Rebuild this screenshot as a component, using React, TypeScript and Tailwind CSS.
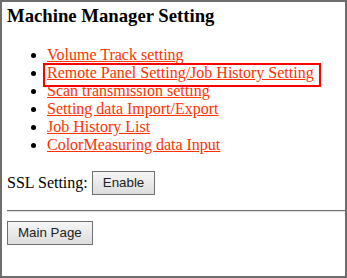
const links = [
  'Volume Track setting',
  'Remote Panel Setting/Job History Setting',
  'Scan transmission setting',
  'Setting data Import/Export',
  'Job History List',
  'ColorMeasuring data Input',
];

function GrayButton({ label }: { label: string }) {
  return (
    <button className="border border-[#707070] bg-gradient-to-b from-[#f6f6f6] to-[#dddddd] px-[10px] py-[3px] text-[13.33px] leading-[16px] text-[#222] [font-family:'Liberation_Sans',Arial,sans-serif]">
      {label}
    </button>
  );
}

export default function App() {
  return (
    <div className="box-border h-[278px] w-[347px] overflow-hidden border-2 border-[#6e6e6e] bg-white pl-[5px] pt-[3px] text-[16px] text-black [font-family:'Liberation_Serif','Times_New_Roman',serif]">
      <h3 className="text-[18.72px] font-bold leading-[22px]">Machine Manager Setting</h3>

      <ul className="mt-[19px] list-disc pl-[40px] leading-[18px]">
        {links.map((l, i) => (
          <li key={l}>
            {i === 1 ? (
              <span className="relative">
                <a href="#" className="text-[#ff3300] underline">
                  {l}
                </a>
                <span className="pointer-events-none absolute -top-[1px] -bottom-[6px] -left-[4px] -right-[7px] border-2 border-[#ff0000]" />
              </span>
            ) : (
              <a href="#" className="text-[#ff3300] underline">
                {l}
              </a>
            )}
          </li>
        ))}
      </ul>

      <div className="mt-[17px] flex items-center gap-[4px]">
        <span>SSL Setting:</span>
        <GrayButton label="Enable" />
      </div>

      <div className="mt-[15px] h-[2px] border-t border-[#707070] bg-[#e0e0e0]" />

      <div className="mt-[8px]">
        <GrayButton label="Main Page" />
      </div>
    </div>
  );
}
